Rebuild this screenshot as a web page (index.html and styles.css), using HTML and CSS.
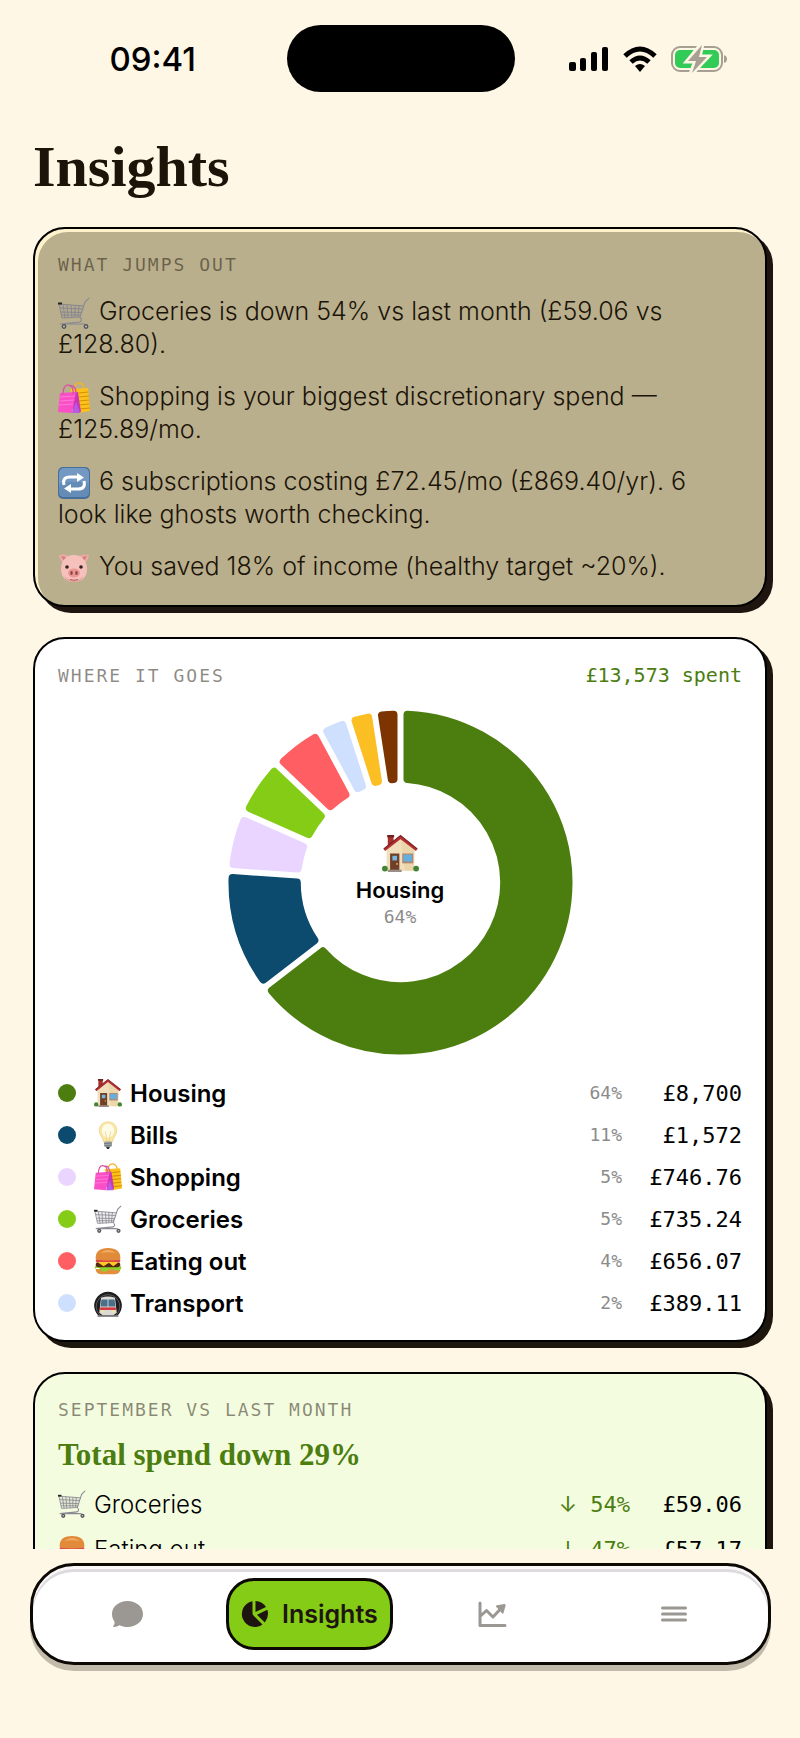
FILE: index.html
```html
<!DOCTYPE html>
<html lang="en">
<head>
    <meta charset="UTF-8">
    <meta name="viewport" content="width=device-width, initial-scale=1.0">
    <title>Insights</title>
    <link rel="stylesheet" href="styles.css">
</head>
<body>

<!-- Shared category icons -->
<svg class="sprite" aria-hidden="true">
    <symbol id="cart" viewBox="0 0 32 32">
        <path d="M1 7 L25 8 L22 20 L4 21 Z" fill="#8f8f98" fill-opacity=".15"/>
        <path d="M1 7 L26 9 M2 11 L25 12 M3 15 L24 15.500 M3.500 18 L23 18 M4 21 L22 20 M1 7 L4 21 M5 7.500 L7 21 M9 7.500 L10 21 M13 8 L14 21 M17 8 L17 20 M21 8 L20 20" fill="none" stroke="#85858d" stroke-width=".9"/>
        <path d="M31 1 L27 5 L22 20 Q25 23 22 25 L2 27 M6 27 L27 27" fill="none" stroke="#8a8a93" stroke-width="1.200"/>
        <rect x="0" y="5.500" width="4" height="2" fill="#222"/>
        <circle cx="6" cy="29.500" r="2.400" fill="#55555c"/><circle cx="28" cy="29.500" r="2.400" fill="#55555c"/>
        <circle cx="6" cy="29.500" r=".9" fill="#ccc"/><circle cx="28" cy="29.500" r=".9" fill="#ccc"/>
    </symbol>
    <symbol id="bags" viewBox="0 0 32 32">
        <path d="M16 9 Q16 1 21 1 Q26 1 27 9" fill="none" stroke="#f0b429" stroke-width="1.500"/>
        <path d="M12 7 L30 6 L32 29 L20 31 Z" fill="#fcc21b"/>
        <path d="M21 11 L30 10 M21 15 L31 14 M21 19 L31 18 M21 23 L31 22 M21 27 L32 26" stroke="#d98e04" stroke-width="1.200"/>
        <path d="M14 10 L20 10 L23 30 L15 31 Z" fill="#c837b5"/>
        <path d="M2 11 L18 10 L14 31 L0 30 Z" fill="#fb4fc8"/>
        <path d="M14 31 L18 20 L22 31 Z" fill="#b65be8"/>
        <path d="M2 15 L17 14 M2 19 L16 18 M1 23 L15 22" stroke="#ff7ad8" stroke-width="1"/>
        <path d="M5 13 Q5 3 10 3 Q16 3 15 13 M11 4 Q18 2 18 12" fill="none" stroke="#d8589f" stroke-width="1.400"/>
    </symbol>
    <symbol id="repeat" viewBox="0 0 32 32">
        <rect width="32" height="32" rx="5" fill="#486f9c"/>
        <rect x="1" y="1" width="30" height="29" rx="5" fill="#7399c2"/>
        <rect x="1" y="15" width="30" height="15" rx="5" fill="#658cb7"/>
        <path d="M6 18 Q4 10 12 10 L21 10 M26 14 Q28 22 20 22 L11 22" fill="none" stroke="#fff" stroke-width="3"/>
        <path d="M19 6 L26 10.500 L19 15 Z M13 17 L6 21.500 L13 26 Z" fill="#fff"/>
    </symbol>
    <symbol id="pig" viewBox="0 0 32 32">
        <path d="M1 3 Q8 1 13 6 L6 12 Q2 9 1 3 Z M31 3 Q24 1 19 6 L26 12 Q30 9 31 3 Z" fill="#f0a9a5"/>
        <path d="M3 4 Q7 4 10 7 L6 9 Z M29 4 Q25 4 22 7 L26 9 Z" fill="#c9807e"/>
        <path d="M16 3 C24 3 29 9 29 17 C29 25 24 30 16 30 C8 30 3 25 3 17 C3 9 8 3 16 3 Z" fill="#f7c1bb"/>
        <path d="M6 24 Q16 33 26 24 Q23 30 16 30 Q9 30 6 24 Z" fill="#e59d99"/>
        <circle cx="9" cy="15" r="1.800" fill="#33211f"/><circle cx="23" cy="15" r="1.800" fill="#33211f"/>
        <ellipse cx="16" cy="21" rx="6" ry="4.500" fill="#ea9794"/>
        <ellipse cx="13.500" cy="21" rx="1.300" ry="2" fill="#8f4546"/><ellipse cx="18.500" cy="21" rx="1.300" ry="2" fill="#8f4546"/>
        <path d="M12 27.500 Q16 29 20 27.500" fill="none" stroke="#a85d5c" stroke-width="1"/>
    </symbol>
    <symbol id="house" viewBox="0 0 32 32">
        <rect x="5" y="1" width="5" height="10" fill="#a3322b"/><rect x="4.500" y="0" width="6" height="2" fill="#71201d"/>
        <path d="M16 2 L28 12 L28 31 L4 31 L4 12 Z" fill="#f0dfba"/>
        <path d="M16 3 L28 14 L27 31 L20 31 Z" fill="#e7d0a4" fill-opacity=".6"/>
        <path d="M2 13 L16 2 L30 13" fill="none" stroke="#b52f32" stroke-width="2.400"/>
        <path d="M1.500 12 L16 .5 L30.500 12" fill="none" stroke="#7c1c22" stroke-width="1"/>
        <rect x="7" y="16" width="8" height="15" fill="#6f3f2a"/><rect x="9" y="18" width="4" height="4" fill="#74b9e2"/>
        <circle cx="13" cy="25" r=".8" fill="#e9bc51"/>
        <rect x="17.500" y="16" width="9.500" height="8.500" fill="#b0876a"/><rect x="18.500" y="17" width="7.500" height="6" fill="#65aee0"/>
        <rect x="5" y="30" width="12" height="2" fill="#9a8f86"/>
        <circle cx="2.500" cy="29" r="2.500" fill="#438331"/><circle cx="29.500" cy="29" r="2.500" fill="#438331"/>
    </symbol>
    <symbol id="bulb" viewBox="0 0 32 32">
        <path d="M16 1 C22 1 26 5 26 11 C26 16 22 18 21 24 L11 24 C10 18 6 16 6 11 C6 5 10 1 16 1 Z" fill="#fbe7a5" stroke="#edd58a" stroke-width="1"/>
        <ellipse cx="16" cy="11" rx="7" ry="8" fill="#fffbe9"/>
        <path d="M13 12 L15 24 M19 12 L17 24" stroke="#e8cb7a" stroke-width=".8"/>
        <rect x="11.500" y="23.500" width="9" height="6" rx="1.500" fill="#9fa4a7"/>
        <path d="M11.500 26 L20.500 25 M12 28.500 L20 27.500" stroke="#6c7275" stroke-width="1"/>
        <path d="M13.500 29.500 L18.500 29.500 L17 32 L15 32 Z" fill="#333"/>
    </symbol>
    <symbol id="burger" viewBox="0 0 32 32">
        <path d="M2 25 L30 25 Q30 31 24 31 L8 31 Q2 31 2 25 Z" fill="#e3903e"/>
        <path d="M1 22 Q4 20 8 22 T16 22 T24 22 T31 21 L31 25 Q27 28 23 26 T15 27 T8 26 T1 25 Z" fill="#8bd32c"/>
        <rect x="2" y="17" width="28" height="6" rx="3" fill="#54290f"/>
        <path d="M2 16 L30 16 L22 22 L17 18 L11 22 Z" fill="#fdc827"/>
        <rect x="2" y="14" width="28" height="3" rx="1" fill="#df4848"/>
        <path d="M2 14 C1 5 7 1 16 1 C25 1 31 5 30 14 Q16 17 2 14 Z" fill="#e08a3a"/>
        <path d="M7 7 Q16 0 25 7 Q16 5 7 7 Z" fill="#f3ad63"/>
    </symbol>
    <symbol id="metro" viewBox="0 0 32 32">
        <path d="M7 32 A15.800 15.800 0 1 1 25 32 Z" fill="#1d1d1f"/>
        <path d="M7 30 A13.500 13.500 0 1 1 25 30" fill="none" stroke="#606064" stroke-width="1"/>
        <path d="M8 10 Q16 7 24 10 L26 27 L22 30 L10 30 L6 27 Z" fill="#dcdad4"/>
        <path d="M8.500 12 L15.500 12 L15.500 20 L7.500 20 Z M16.500 12 L23.500 12 L24.500 20 L16.500 20 Z" fill="#48708a"/>
        <rect x="7" y="21" width="18" height="3" fill="#d63a40"/>
        <circle cx="9.500" cy="26" r="1.300" fill="#ffe98a"/><circle cx="22.500" cy="26" r="1.300" fill="#ffe98a"/>
        <rect x="4" y="30" width="24" height="2" fill="#8b8b8f"/>
    </symbol>
</svg>

<div class="screen">

    <header class="status-bar">
        <time class="clock">09:41</time>
        <div class="island"></div>
        <div class="status-icons">
            <svg width="40" height="26" viewBox="0 0 40 26" aria-label="Signal">
                <rect x="0" y="16" width="7" height="9" rx="2"/>
                <rect x="11" y="12" width="6" height="13" rx="2"/>
                <rect x="22" y="6" width="6" height="19" rx="2"/>
                <rect x="33" y="1" width="6" height="24" rx="2"/>
            </svg>
            <svg width="34" height="26" viewBox="0 0 34 26" aria-label="Wi-Fi">
                <path d="M2 10 Q17 -4 32 10" fill="none" stroke="#000" stroke-width="5"/>
                <path d="M8 16 Q17 8 26 16" fill="none" stroke="#000" stroke-width="5"/>
                <path d="M12 20 Q17 16 22 20 L17 26 Z"/>
            </svg>
            <svg width="56" height="28" viewBox="0 0 56 28" aria-label="Battery charging">
                <rect x="1" y="2" width="50" height="24" rx="8" fill="none" stroke="#a69f92" stroke-width="2"/>
                <path d="M53 10 Q56 11 56 14 Q56 17 53 18 Z" fill="#a69f92"/>
                <rect x="4" y="5" width="44" height="18" rx="5" fill="#32cb57"/>
                <path d="M31 -1 L17 16 L25 16 L20 29 L36 12 L28 12 Z" fill="#a69f92" stroke="#fff7e6" stroke-width="5"/>
                <path d="M31 0 L17 16 L25 16 L21 28 L36 12 L28 12 Z" fill="#a69f92"/>
            </svg>
        </div>
    </header>

    <main class="content">
        <h1>Insights</h1>

        <section class="card card-highlights">
            <h2 class="label">WHAT JUMPS OUT</h2>
            <div class="highlights">
                <p><svg class="emoji"><use href="#cart"/></svg> Groceries is down 54% vs last month (£59.06 vs £128.80).</p>
                <p><svg class="emoji"><use href="#bags"/></svg> Shopping is your biggest discretionary spend — £125.89/mo.</p>
                <p><svg class="emoji"><use href="#repeat"/></svg> 6 subscriptions costing £72.45/mo (£869.40/yr). 6 look like ghosts worth checking.</p>
                <p><svg class="emoji"><use href="#pig"/></svg> You saved 18% of income (healthy target ~20%).</p>
            </div>
        </section>

        <section class="card">
            <div class="card-head">
                <h2 class="label">WHERE IT GOES</h2>
                <span class="total">£13,573 spent</span>
            </div>
            <div class="donut">
                <svg id="donutChart" viewBox="-173 -173 346 346" aria-label="Spending by category"></svg>
                <div class="donut-center">
                    <svg class="donut-emoji"><use href="#house"/></svg>
                    <strong>Housing</strong>
                    <span class="percent">64%</span>
                </div>
            </div>
            <ul class="legend">
                <li><span class="dot housing"></span><svg class="emoji"><use href="#house"/></svg><span class="name">Housing</span><span class="percent">64%</span><span class="amount">£8,700</span></li>
                <li><span class="dot bills"></span><svg class="emoji"><use href="#bulb"/></svg><span class="name">Bills</span><span class="percent">11%</span><span class="amount">£1,572</span></li>
                <li><span class="dot shopping"></span><svg class="emoji"><use href="#bags"/></svg><span class="name">Shopping</span><span class="percent">5%</span><span class="amount">£746.76</span></li>
                <li><span class="dot groceries"></span><svg class="emoji"><use href="#cart"/></svg><span class="name">Groceries</span><span class="percent">5%</span><span class="amount">£735.24</span></li>
                <li><span class="dot eating"></span><svg class="emoji"><use href="#burger"/></svg><span class="name">Eating out</span><span class="percent">4%</span><span class="amount">£656.07</span></li>
                <li><span class="dot transport"></span><svg class="emoji"><use href="#metro"/></svg><span class="name">Transport</span><span class="percent">2%</span><span class="amount">£389.11</span></li>
            </ul>
        </section>

        <section class="card card-compare">
            <h2 class="label">SEPTEMBER VS LAST MONTH</h2>
            <h3>Total spend down 29%</h3>
            <ul class="compare">
                <li><svg class="emoji"><use href="#cart"/></svg><span class="name">Groceries</span><span class="change"><span class="arrow">↓</span> 54%</span><span class="amount">£59.06</span></li>
                <li><svg class="emoji"><use href="#burger"/></svg><span class="name">Eating out</span><span class="change"><span class="arrow">↓</span> 47%</span><span class="amount">£57.17</span></li>
            </ul>
        </section>
    </main>

    <nav class="tab-bar">
        <button type="button" aria-label="Chat">
            <svg width="32" height="28" viewBox="0 0 32 28">
                <path d="M16.500 1 C25 1 32 6.500 32 14 C32 21.500 25 27 16.500 27 C13.500 27 11 26.400 8.500 25.200 Q6 27 3 27 Q1.500 27 2.500 25.500 Q4 23.500 3.500 21.500 C2 19.500 1 17 1 14 C1 6.500 8 1 16.500 1 Z"/>
            </svg>
        </button>
        <button type="button" class="active">
            <svg width="28" height="28" viewBox="0 0 28 28">
                <path d="M11.500 1.200 A13 13 0 1 0 21.500 24.500 L12.500 15.500 Q11.500 14.500 11.500 13 Z"/>
                <path d="M14.500 1 Q21.500 1.500 25 7 L14.500 12 Z"/>
                <path d="M26.300 9.800 Q28.500 16.500 23.800 22.500 L16 14.800 Z"/>
            </svg>
            Insights
        </button>
        <button type="button" aria-label="Trends">
            <svg width="30" height="28" viewBox="0 0 30 28">
                <path d="M3 3 L3 25.500 L28 25.500 M3.500 16 L9.500 10.500 L16 17 L23 9.500" fill="none" stroke="currentColor" stroke-width="3" stroke-linecap="round" stroke-linejoin="round"/>
                <path d="M19 6.500 Q18.500 5.500 20 5.200 L27.500 4 Q29 4 28.600 5.500 L26.500 13 Q26 14.200 25 13.200 Z"/>
            </svg>
        </button>
        <button type="button" aria-label="Menu">
            <svg width="26" height="18" viewBox="0 0 26 18">
                <path d="M1.500 3 L24.500 3 M1.500 9 L24.500 9 M1.500 15 L24.500 15" stroke="currentColor" stroke-width="3" stroke-linecap="round"/>
            </svg>
        </button>
    </nav>
</div>

<script>
    // Donut slices: start angle in degrees, clockwise from the top
    const slices = [
        { color: "#4b7d0f", from: 0, to: 232.3 },
        { color: "#0c4a6e", from: 232.3, to: 273.9 },
        { color: "#e9d5ff", from: 273.9, to: 293.9 },
        { color: "#84cc16", from: 293.9, to: 313.6 },
        { color: "#ff5f63", from: 313.6, to: 331.8 },
        { color: "#cfdffe", from: 331.8, to: 342.1 },
        { color: "#fbbf24", from: 342.1, to: 351.3 },
        { color: "#7c3400", from: 351.3, to: 360 }
    ];

    const corner = 4;
    const gap = 6;
    const outer = 172.5 - corner;
    const inner = 100 + corner;
    const inset = gap / 2 + corner;

    // Point on a circle, kept at a fixed distance from the slice edge
    function point(radius, degrees, side) {
        const angle = degrees * Math.PI / 180 + side * Math.asin(inset / radius);
        return (radius * Math.sin(angle)).toFixed(2) + " " + (-radius * Math.cos(angle)).toFixed(2);
    }

    const chart = document.getElementById("donutChart");
    slices.forEach(slice => {
        const large = slice.to - slice.from > 180 ? 1 : 0;
        const path = document.createElementNS("http://www.w3.org/2000/svg", "path");
        path.setAttribute("d",
            "M" + point(outer, slice.from, 1) +
            " A" + outer + " " + outer + " 0 " + large + " 1 " + point(outer, slice.to, -1) +
            " L" + point(inner, slice.to, -1) +
            " A" + inner + " " + inner + " 0 " + large + " 0 " + point(inner, slice.from, 1) + " Z");
        path.setAttribute("fill", slice.color);
        path.setAttribute("stroke", slice.color);
        path.setAttribute("stroke-width", corner * 2);
        path.setAttribute("stroke-linejoin", "round");
        chart.appendChild(path);
    });
</script>

</body>
</html>
```
FILE: styles.css
```css
* {
    box-sizing: border-box;
}

body {
    margin: 0;
    background-color: #fff7e6;
    color: #1c1408;
    font-family: Inter, "Liberation Sans", sans-serif;
}

h1, h2, h3, p, ul {
    margin: 0;
    padding: 0;
}

ul {
    list-style: none;
}

.sprite {
    display: none;
}

.screen {
    display: flex;
    flex-direction: column;
    height: 100vh;
}

/* Status bar */
.status-bar {
    display: grid;
    grid-template-columns: 1fr 228px 1fr;
    align-items: center;
    justify-items: center;
    flex: none;
    height: 117px;
    padding: 0 18px 0 19px;
    color: #000;
}

.clock {
    font-size: 33px;
    font-weight: 500;
}

.island {
    width: 100%;
    height: 67px;
    border-radius: 34px;
    background-color: #000;
}

.status-icons {
    display: flex;
    align-items: center;
    gap: 14px;
}

/* Scrolling content */
.content {
    flex: 1;
    min-height: 0;
    overflow-y: auto;
    scrollbar-width: none;
    padding: 18px 33px 0;
}

h1 {
    margin-bottom: 28px;
    font-family: "Liberation Serif", serif;
    font-size: 58px;
    font-weight: bold;
    line-height: 64px;
}

.card {
    margin-bottom: 30px;
    padding: 23px 23px 22px;
    border: 2px solid #000;
    border-radius: 32px;
    background-color: #fff;
    box-shadow: 6px 6px 0 #1c160c;
}

.card-highlights {
    background-color: #b9af8d;
    box-shadow: 6px 6px 0 #1f1510, inset 3px 3px 0 #fdf2cb;
}

.card-compare {
    background-color: #f4fce0;
}

.label {
    color: rgba(28, 20, 8, 0.5);
    font-family: "DejaVu Sans Mono", monospace;
    font-size: 18px;
    font-weight: normal;
    letter-spacing: 2px;
    line-height: 26px;
}

.emoji {
    width: 28px;
    height: 28px;
}

.highlights {
    display: flex;
    flex-direction: column;
    gap: 19px;
    margin-top: 17px;
    padding-right: 16px;
    font-size: 25px;
    font-weight: 300;
    line-height: 33px;
}

.highlights .emoji {
    width: 32px;
    height: 32px;
    margin: -4px 2px -4px 0;
    vertical-align: middle;
}

.card-head {
    display: flex;
    justify-content: space-between;
    align-items: baseline;
    height: 26px;
}

.total {
    color: #4b7d0f;
    font-family: "DejaVu Sans Mono", monospace;
    font-size: 20px;
    line-height: 26px;
}

/* Donut chart */
.donut {
    position: relative;
    width: 345px;
    height: 345px;
    margin: 22px auto 23px;
}

.donut > svg {
    display: block;
    width: 100%;
    height: 100%;
}

.donut-center {
    position: absolute;
    inset: 0;
    display: flex;
    flex-direction: column;
    align-items: center;
    justify-content: center;
    color: #000;
}

.donut-emoji {
    width: 37px;
    height: 37px;
    margin-bottom: 4px;
}

.donut-center strong {
    font-size: 22px;
    font-weight: 600;
    line-height: 28px;
}

.percent {
    color: #8c8c8c;
    font-family: "DejaVu Sans Mono", monospace;
    font-size: 18px;
    line-height: 26px;
}

/* Category rows */
.legend {
    display: flex;
    flex-direction: column;
    gap: 12px;
}

.legend li,
.compare li {
    display: flex;
    align-items: center;
    height: 30px;
    color: #000;
    font-size: 24px;
}

.name {
    flex: 1;
    margin-left: 8px;
}

.legend .name {
    font-weight: 600;
}

.compare .name {
    font-weight: 300;
}

.amount {
    width: 104px;
    margin-left: 16px;
    font-family: "DejaVu Sans Mono", monospace;
    font-size: 22px;
    text-align: right;
}

.dot {
    width: 18px;
    height: 18px;
    margin-right: 18px;
    border-radius: 50%;
}

.housing { background-color: #4b7d0f; }
.bills { background-color: #0c4a6e; }
.shopping { background-color: #e9d5ff; }
.groceries { background-color: #84cc16; }
.eating { background-color: #ff5f63; }
.transport { background-color: #cfdffe; }

h3 {
    margin: 12px 0 14px;
    color: #4b7d0f;
    font-family: "Liberation Serif", serif;
    font-size: 31px;
    font-weight: bold;
    line-height: 40px;
}

.compare {
    display: flex;
    flex-direction: column;
    gap: 15px;
}

.compare .amount {
    width: 96px;
}

.change {
    color: #4b7d0f;
    font-family: "DejaVu Sans Mono", monospace;
    font-size: 22px;
}

.arrow {
    font-family: Inter, sans-serif;
}

/* Bottom tabs */
.tab-bar {
    display: grid;
    grid-template-columns: repeat(4, 1fr);
    gap: 16px;
    flex: none;
    margin: 14px 29px 73px 30px;
    padding: 12px 11px;
    border: 3px solid #0c0804;
    border-radius: 44px;
    background-color: #fff;
    box-shadow: 0 6px 0 #c2baab, inset 0 3px 0 #faf8f9, inset 0 6px 0 #dedade;
}

.tab-bar button {
    display: flex;
    align-items: center;
    justify-content: center;
    gap: 13px;
    height: 72px;
    padding: 0;
    border: 3px solid transparent;
    border-radius: 28px;
    background: none;
    color: #9b9792;
    font: 600 25px Inter, "Liberation Sans", sans-serif;
    cursor: pointer;
}

.tab-bar svg {
    fill: currentColor;
}

.tab-bar .active {
    border-color: #0c0804;
    background-color: #84cc16;
    color: #1f1510;
}
```
